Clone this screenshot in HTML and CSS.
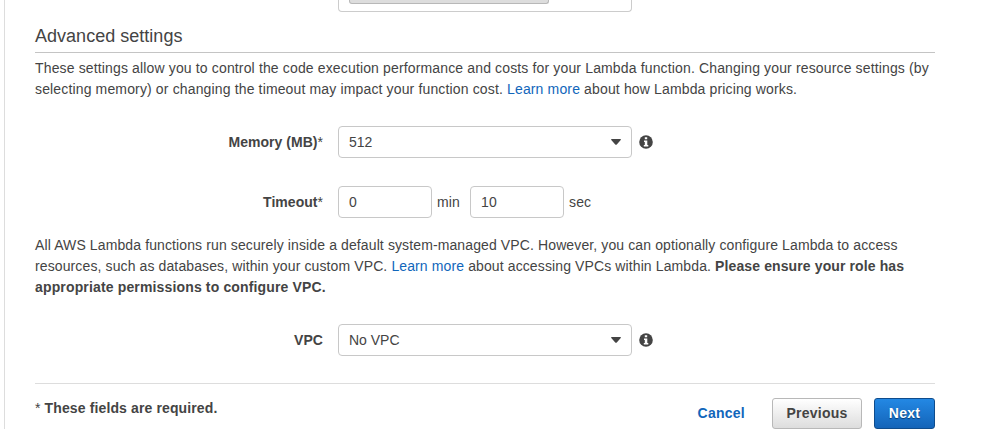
FILE: index.html
```html
<!DOCTYPE html>
<html lang="en">
<head>
<meta charset="utf-8">
<title>Advanced settings</title>
<link rel="stylesheet" href="styles.css">
</head>
<body>
<svg class="defs" width="0" height="0" aria-hidden="true">
  <symbol id="info" viewBox="0 0 14 14">
    <circle cx="7" cy="7" r="6.8" fill="#444"/>
    <path fill="#fff" d="M5.8 2.2h2.4v2H5.8zM5 5.4h3.3v4.5h1v1.5H4.8V9.9h1V6.9H5z"/>
  </symbol>
  <symbol id="caret" viewBox="0 0 10 6">
    <path fill="#444" d="M.7 0h8.6q1.2.3.2 1.3L6 5.3q-1 1-2 0L.5 1.3Q-.5.3.7 0z"/>
  </symbol>
</svg>
<main class="panel">
  <div class="previous-field"><div class="previous-field-button"></div></div>
  <h2 class="heading">Advanced settings</h2>
  <p class="text">These settings allow you to control the code execution performance and costs for your Lambda function. Changing your resource settings (by<br>selecting memory) or changing the timeout may impact your function cost. <a href="#">Learn more</a> about how Lambda pricing works.</p>
  <div class="row">
    <label class="label"><b>Memory (MB)</b>*</label>
    <div class="box select"><span>512</span><svg class="caret"><use href="#caret"/></svg></div>
    <svg class="info"><use href="#info"/></svg>
  </div>
  <div class="row timeout">
    <label class="label"><b>Timeout</b>*</label>
    <div class="box small">0</div>
    <span class="unit">min</span>
    <div class="box small">10</div>
    <span class="unit">sec</span>
  </div>
  <p class="text vpc-text">All AWS Lambda functions run securely inside a default system-managed VPC. However, you can optionally configure Lambda to access<br>resources, such as databases, within your custom VPC. <a href="#">Learn more</a> about accessing VPCs within Lambda. <b>Please ensure your role has</b><br><b class="permissions">appropriate permissions to configure VPC.</b></p>
  <div class="row">
    <label class="label"><b>VPC</b></label>
    <div class="box select"><span>No VPC</span><svg class="caret"><use href="#caret"/></svg></div>
    <svg class="info"><use href="#info"/></svg>
  </div>
  <footer class="footer">
    <div class="required">* <b>These fields are required.</b></div>
    <a class="cancel" href="#">Cancel</a>
    <div class="button">Previous</div>
    <div class="button primary">Next</div>
  </footer>
</main>
</body>
</html>
```
FILE: styles.css
```css
* { box-sizing: border-box; }
body {
  margin: 0;
  background: #fff;
  color: #444;
  font: 14px/21px "Liberation Sans", Arial, sans-serif;
  letter-spacing: 0.145px;
}
a { color: #1166bb; text-decoration: none; }
.defs { display: block; }
.panel {
  width: 931px;
  height: 429px;
  margin-left: 4px;
  padding-left: 30px;
  border-left: 1px solid #ddd;
}
.previous-field {
  width: 294px;
  height: 12px;
  margin-left: 303px;
  padding-left: 10px;
  border: 1px solid #ccc;
  border-top: 0;
  border-radius: 0 0 4px 4px;
}
.previous-field-button {
  width: 200px;
  height: 4px;
  background: #ddd;
  border: 1px solid #b8b8b8;
  border-top: 0;
  border-radius: 0 0 3px 3px;
}
.heading {
  height: 29px;
  margin: 12px 0 5px;
  border-bottom: 1px solid #c4c4c4;
  font-size: 18px;
  font-weight: normal;
  letter-spacing: 0.02px;
  line-height: 25px;
}
.text { margin: 0; white-space: nowrap; }
.vpc-text { letter-spacing: 0.115px; }
.permissions { letter-spacing: 0.15px; }
.row { display: flex; height: 32px; align-items: center; margin-top: 26px; }
.timeout { margin-top: 28px; margin-bottom: 17px; }
.label { width: 288px; margin-right: 15px; text-align: right; letter-spacing: 0.03px; }
.box {
  height: 32px;
  padding: 0 10px;
  border: 1px solid #c8c8c8;
  border-radius: 4px;
  line-height: 31px;
}
.select { display: flex; width: 294px; align-items: center; justify-content: space-between; letter-spacing: 0; }
.caret { width: 10px; height: 6px; }
.small { width: 94px; }
.unit { width: 38px; padding-left: 5px; }
.info { width: 14px; height: 14px; margin-left: 7px; }
.footer {
  display: flex;
  height: 46px;
  margin-top: 27px;
  padding-top: 14px;
  border-top: 1px solid #ddd;
  font-weight: bold;
  letter-spacing: 0.25px;
}
.required { margin-right: auto; font-weight: normal; letter-spacing: 0.125px; }
.cancel { margin-right: 27px; line-height: 30px; }
.button {
  width: 90px;
  height: 31px;
  margin-right: 12px;
  border: 1px solid #b8b8b8;
  border-radius: 3px;
  background: linear-gradient(#fff, #ddd);
  line-height: 29px;
  text-align: center;
}
.primary {
  width: 61px;
  margin-right: 0;
  border-color: #0f4c8c;
  background: linear-gradient(#2388e4, #1464b8);
  color: #fff;
  text-shadow: 0 1px 1px #063a70;
}
```
